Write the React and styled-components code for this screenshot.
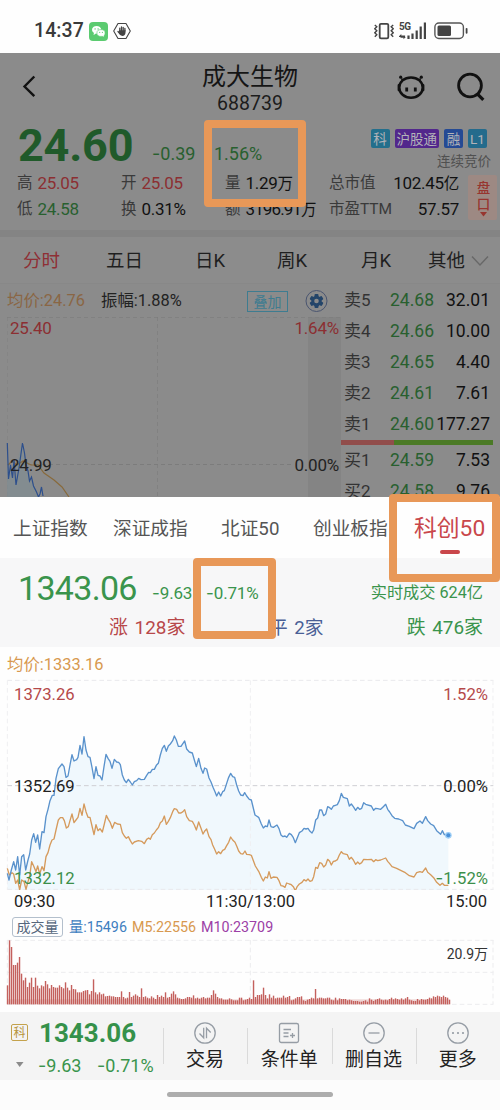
import React from "react";
import styled, { createGlobalStyle } from "styled-components";

const GlobalStyle = createGlobalStyle`
  * {
    box-sizing: border-box;
  }
  body {
    margin: 0;
    background: #fcfcfc;
    font-family: "Roboto", "Noto Sans CJK SC", sans-serif;
    color: #222;
  }
  svg {
    display: block;
    flex-shrink: 0;
  }
`;

const Screen = styled.main`
  position: relative;
  width: 500px;
  height: 1110px;
  overflow: hidden;
  display: flex;
  flex-direction: column;
`;

const Text = styled.span`
  font-size: ${(p) => p.$size || 17}px;
  font-weight: ${(p) => p.$weight || 400};
  color: ${(p) => p.$color || "inherit"};
  letter-spacing: ${(p) => p.$ls || 0}px;
  line-height: ${(p) => p.$lh || 26}px;
  white-space: nowrap;
`;

const Sign = styled.span`
  font-family: "Inter";
  letter-spacing: 0;
`;

/* ---------- status bar ---------- */

const StatusBar = styled.header`
  height: 53px;
  padding: 9px 31px 0 34px;
  background: #fefefe;
  display: flex;
  align-items: center;
  justify-content: space-between;
  flex-shrink: 0;
`;

const StatusGroup = styled.div`
  display: flex;
  align-items: center;
  gap: 5px;
`;

/* ---------- stock page behind the sheet ---------- */

const StockPage = styled.section`
  height: 444px;
  background: #8b8b8b;
  flex-shrink: 0;
  overflow: hidden;
`;

const TitleBar = styled.div`
  height: 65px;
  display: grid;
  grid-template-columns: 110px 1fr 110px;
`;

const BackSlot = styled.div`
  padding: 22px 0 0 22px;
`;

const TitleBox = styled.div`
  padding-top: 11px;
  display: flex;
  flex-direction: column;
  align-items: center;
`;

const TitleIcons = styled.div`
  padding: 19px 14px 0 0;
  display: flex;
  justify-content: flex-end;
  gap: 32px;
`;

const PriceLine = styled.div`
  height: 52px;
  display: flex;
  justify-content: space-between;
  padding: 0 9px 0 18px;
`;

const Prices = styled.div`
  display: grid;
  grid-template-columns: 134px 62px auto;
  line-height: 0;
`;

const PriceChange = styled.div`
  padding-top: 23px;
`;

const TagColumn = styled.div`
  padding-top: 11px;
  display: flex;
  flex-direction: column;
  align-items: flex-end;
  gap: 3px;
`;

const TagRow = styled.div`
  display: flex;
  gap: 5px;
  padding-right: 4px;
`;

const Tag = styled.span`
  height: 19px;
  min-width: 19px;
  padding: 0 2px;
  border-radius: 2px;
  background: ${(p) => p.$bg};
  color: #b3b3b8;
  font-size: 13.5px;
  line-height: 21px;
  text-align: center;
`;

const StatsWrap = styled.div`
  height: 60px;
  display: flex;
  padding: 0 3px 0 17px;
`;

const Stats = styled.div`
  width: 442px;
  display: grid;
  grid-template-columns: 104px 104px 104px 130px;
  grid-auto-rows: 26px;
`;

const Stat = styled.div`
  display: flex;
  gap: 5px;
  justify-content: ${(p) => (p.$wide ? "space-between" : "flex-start")};
`;

const Unit = styled.span`
  font-size: 15.5px;
`;

const DepthButton = styled.div`
  margin: 5px 0 0 9px;
  width: 29px;
  height: 45px;
  border-radius: 2px;
  background: #9d8983;
  color: #97352f;
  display: flex;
  flex-direction: column;
  align-items: center;
  font-size: 13.5px;
  font-weight: 500;
  line-height: 16px;
  padding: 5px 0 0 2px;
`;

const Gap = styled.div`
  height: 7px;
  background: #848484;
`;

const PeriodTabs = styled.nav`
  height: 47px;
  padding: 1px 0 0 23px;
  display: grid;
  grid-template-columns: 83px 89px 82px 84px 67px 43px 18px;
  align-items: center;
  background: #8c8c8c;
  border-bottom: 1px solid #888;
`;

const StockBody = styled.div`
  display: grid;
  grid-template-columns: 341px 159px;
`;

const ChartHead = styled.div`
  height: 33px;
  padding: 1px 0 0 7px;
  display: grid;
  grid-template-columns: 94px 146px 58px 24px;
  align-items: center;
`;

const Overlay = styled.span`
  width: 41px;
  height: 21px;
  border: 1px solid #3e7c90;
  color: #3e7c90;
  font-size: 14px;
  line-height: 20px;
  text-align: center;
`;

const ChartFrame = styled.div`
  display: grid;
  height: ${(p) => p.$height}px;
  > * {
    grid-area: 1 / 1;
  }
`;

const LabelLayer = styled.div`
  display: flex;
  flex-direction: column;
  padding: ${(p) => p.$pad};
  gap: ${(p) => p.$gap || 0}px;
`;

const LabelRow = styled.div`
  display: flex;
  justify-content: space-between;
  height: 20px;
`;

const OrderBook = styled.div`
  padding-top: 1px;
`;

const OrderRow = styled.div`
  height: 31px;
  padding: 0 10px 1px 3px;
  display: grid;
  grid-template-columns: 46px 44px 1fr;
  align-items: center;
  text-align: right;
  > :first-child {
    text-align: left;
  }
`;

const RatioBar = styled.div`
  height: 5px;
  width: 152px;
  background: #4b7a26;
  display: flex;
`;

const RatioSell = styled.div`
  width: 35%;
  background: #914d4b;
`;

/* ---------- index sheet ---------- */

const Sheet = styled.section`
  height: 515px;
  background: #fefefe;
  flex-shrink: 0;
`;

const IndexTabs = styled.nav`
  height: 61px;
  padding-left: 13px;
  display: grid;
  grid-template-columns: 100px 108px 92px 101px auto;
  justify-content: start;
  line-height: 0;
  padding-top: 19px;
`;

const ActiveTab = styled.div`
  display: flex;
  flex-direction: column;
  align-items: center;
  &::after {
    content: "";
    width: 20px;
    height: 4px;
    margin-top: 8px;
    border-radius: 2px;
    background: #c9474b;
  }
`;

const IndexQuote = styled.div`
  height: 89px;
  padding: 10px 17px 0 18px;
  background: #f7f7f8;
`;

const IndexPrices = styled.div`
  height: 40px;
  display: grid;
  grid-template-columns: 134px 54px 1fr auto;
  line-height: 0;
  > :not(:first-child) {
    padding-top: 12px;
  }
`;

const Breadth = styled.div`
  padding: 7px 0 0 91px;
  display: grid;
  grid-template-columns: 160px 1fr auto;
  word-spacing: 2px;
`;

const AverageLine = styled.div`
  height: 28px;
  padding: 5px 0 0 7px;
  line-height: 0;
`;

const AxisRow = styled.div`
  height: 23px;
  padding: 0 13px 0 14px;
  display: flex;
  justify-content: space-between;
`;

const VolumeHead = styled.div`
  height: 25px;
  padding-left: 12px;
  display: grid;
  grid-template-columns: 57px 63px 69px auto;
  justify-content: start;
  align-items: center;
`;

const VolumeName = styled.span`
  width: 51px;
  height: 20px;
  border: 1px solid #b3bfcc;
  border-radius: 3px;
  color: #56677c;
  font-size: 14px;
  line-height: 19px;
  text-align: center;
`;

/* ---------- bottom bar ---------- */

const BottomBar = styled.footer`
  height: 68px;
  background: #f4f4f4;
  display: grid;
  grid-template-columns: 163px repeat(4, 1fr);
  flex-shrink: 0;
`;

const BottomQuote = styled.div`
  padding: 7px 0 0 11px;
  display: grid;
  grid-template-columns: 28px 1fr;
  grid-template-rows: 27px 38px;
  align-items: center;
`;

const BoardTag = styled.span`
  width: 17px;
  height: 17px;
  border: 1px solid #c4a24c;
  border-radius: 2px;
  color: #b8953c;
  font-size: 12px;
  line-height: 16px;
  text-align: center;
`;

const BottomChange = styled.div`
  display: grid;
  grid-template-columns: 59px auto;
  padding-top: 1px;
  margin-left: -1px;
`;

const Action = styled.button`
  border: 0;
  padding: 10px 0 0;
  background: linear-gradient(#dadada, #dadada) 0 16px / 1px 36px no-repeat;
  display: flex;
  flex-direction: column;
  align-items: center;
  gap: 3px;
  font-family: inherit;
  color: #222;
`;

const HomeArea = styled.div`
  height: 30px;
  display: flex;
  justify-content: center;
  padding-top: 12px;
  background: #fcfcfc;
`;

const HomeBar = styled.div`
  width: 166px;
  height: 5px;
  border-radius: 3px;
  background: #adadad;
`;

/* hand-drawn marker frames laid over the screen */
const Marker = styled.div`
  position: absolute;
  left: ${(p) => p.$x}px;
  top: ${(p) => p.$y}px;
  width: ${(p) => p.$w}px;
  height: ${(p) => p.$h}px;
  border: 8px solid #e89858;
  border-radius: 4px;
`;

/* ---------- data ---------- */

const stats = [
  { label: "高", value: "25.05", color: "#8c2f32" },
  { label: "开", value: "25.05", color: "#8c2f32" },
  { label: "量", value: "1.29", unit: "万" },
  { label: "总市值", value: "102.45", unit: "亿", wide: true },
  { label: "低", value: "24.58", color: "#28602f" },
  { label: "换", value: "0.31%" },
  { label: "额", value: "3196.91", unit: "万", ls: -0.9 },
  { label: "市盈TTM", value: "57.57", wide: true },
];

const sells = [
  ["卖5", "24.68", "32.01"],
  ["卖4", "24.66", "10.00"],
  ["卖3", "24.65", "4.40"],
  ["卖2", "24.61", "7.61"],
  ["卖1", "24.60", "177.27"],
];

const buys = [
  ["买1", "24.59", "7.53"],
  ["买2", "24.58", "9.76"],
];

// chart space is three units per pixel
const priceLine =
  "22,670 27,690 34,660 41,635 47,660 53,620 59,675 65,620 71,614 77,660 84,630 89,612 95,570 101,551 107,577 113,555 119,597 126,545 132,548 138,500 144,478 150,452 157,436 162,436 168,385 175,356 186,342 192,350 198,382 204,378 210,345 216,314 222,333 230,329 234,322 240,286 246,312 252,260 258,300 264,320 270,322 276,352 282,386 288,350 294,376 300,378 306,390 312,350 318,313 324,325 330,334 336,355 343,328 350,336 356,337 361,344 367,375 373,390 379,398 385,388 391,396 397,405 403,395 410,392 416,385 423,389 433,388 440,376 446,367 451,368 457,358 463,358 469,346 475,340 481,315 487,295 493,286 499,304 505,288 511,282 518,272 523,258 529,270 535,289 543,289 549,280 554,273 560,297 568,306 577,309 583,330 589,350 596,325 603,355 609,370 614,354 620,357 627,384 633,396 640,414 645,425 650,438 656,426 662,438 668,425 673,422 680,400 686,382 692,370 698,380 704,382 710,405 716,423 722,435 729,437 734,428 740,438 748,448 754,450 765,495 776,502 784,522 790,534 796,528 802,530 807,510 813,530 820,532 831,525 837,536 843,555 849,560 855,558 860,562 868,550 874,554 880,563 886,578 892,563 898,548 906,543 912,535 918,537 924,535 930,544 936,549 941,540 947,510 953,504 959,480 965,480 971,497 977,492 983,470 989,473 994,478 1000,468 1006,466 1012,464 1018,452 1024,430 1030,442 1042,446 1048,468 1054,462 1060,470 1067,481 1073,472 1079,478 1085,475 1091,458 1097,463 1114,468 1121,481 1127,475 1133,476 1142,478 1150,470 1157,463 1163,478 1169,486 1176,497 1184,505 1196,507 1208,512 1216,525 1228,529 1242,536 1250,520 1260,513 1267,520 1277,500 1283,512 1292,522 1301,527 1310,542 1322,553 1327,542 1333,554 1345,556";

const averageLine =
  "22,655 28,675 36,668 41,672 47,700 53,690 59,720 65,690 72,695 78,718 84,695 89,678 95,635 101,648 108,665 113,648 119,672 126,650 132,662 138,620 144,608 150,585 156,570 162,567 168,540 175,510 181,503 188,503 193,512 199,534 205,530 210,512 216,492 222,518 228,510 234,502 240,475 246,496 252,462 258,485 264,502 270,502 276,528 282,554 288,524 294,542 300,536 307,546 313,522 319,496 325,508 331,518 337,535 344,517 352,522 361,523 367,548 373,558 379,565 385,560 391,572 397,582 403,576 415,572 425,574 433,581 440,568 446,564 451,568 457,554 463,549 469,540 475,533 481,518 487,513 493,498 499,523 505,514 511,503 518,485 523,476 530,478 536,489 543,489 549,485 554,479 560,500 568,512 577,514 583,525 589,540 596,516 603,535 609,552 615,542 620,537 627,560 633,569 638,585 644,598 650,612 656,605 662,611 668,601 674,598 680,587 686,577 692,561 698,570 705,577 711,590 716,603 722,611 729,612 735,603 740,613 748,614 754,616 766,648 776,664 784,682 790,693 796,681 802,684 807,665 813,685 820,681 831,682 837,692 843,707 849,708 855,712 860,699 868,702 874,704 880,710 886,722 892,709 898,702 906,697 912,689 918,693 924,687 930,694 936,692 941,680 947,652 953,655 959,638 965,640 971,651 977,645 983,628 989,634 994,645 1000,634 1006,633 1012,629 1018,615 1024,605 1030,611 1042,614 1048,628 1054,622 1060,630 1067,643 1073,636 1079,642 1085,638 1091,628 1103,629 1114,628 1121,635 1127,629 1133,632 1142,630 1157,624 1163,634 1169,641 1176,650 1190,655 1202,661 1216,668 1228,677 1242,681 1250,668 1260,665 1267,667 1277,654 1283,667 1292,674 1301,683 1310,697 1320,706 1327,700 1333,706 1345,706";

const volumes = [
  57, 192, 172, 118, 118, 125, 142, 92, 72, 80, 52, 65, 80, 52, 80, 56, 48, 57,
  54, 70, 60, 48, 58, 52, 50, 50, 57, 52, 48, 66, 50, 42, 58, 46, 45, 36, 36,
  36, 40, 42, 43, 30, 40, 75, 36, 30, 36, 30, 32, 24, 25, 26, 24, 24, 22, 22,
  22, 39, 22, 18, 20, 37, 22, 26, 30, 26, 22, 48, 22, 24, 20, 18, 24, 20, 16,
  28, 22, 26, 22, 36, 20, 22, 32, 39, 30, 20, 18, 16, 16, 18, 22, 22, 20, 27,
  18, 20, 17, 20, 22, 18, 20, 20, 28, 42, 32, 22, 18, 18, 14, 14, 14, 18, 15,
  12, 12, 12, 20, 20, 12, 14, 16, 20, 16, 72, 22, 28, 28, 30, 50, 28, 18, 30,
  20, 26, 18, 20, 20, 20, 26, 20, 22, 25, 12, 14, 18, 22, 22, 24, 12, 10, 14,
  16, 20, 18, 46, 18, 20, 20, 18, 18, 20, 20, 14, 12, 20, 12, 18, 16, 16, 16,
  12, 14, 12, 10, 10, 10, 8, 8, 10, 12, 8, 18, 14, 10, 14, 16, 18, 14, 12, 14,
  12, 16, 20, 15, 18, 16, 14, 18, 14, 18, 22, 14, 12, 10, 10, 16, 12, 16, 14,
  14, 16, 20, 18, 24, 22, 26, 24, 22, 26, 22, 20, 14,
];

/* ---------- icons ---------- */

const WechatIcon = () => (
  <svg width="19" height="19" viewBox="0 0 19 19">
    <rect width="19" height="19" rx="4" fill="#5bcb70" />
    <ellipse cx="7.6" cy="7.8" rx="4.6" ry="3.9" fill="#fff" />
    <path d="M5 10.5 4.6 13l2.5-1.6z" fill="#fff" />
    <ellipse cx="12" cy="11" rx="4.1" ry="3.4" fill="#fff" stroke="#5bcb70" strokeWidth=".6" />
    <path d="m13 13.8 2 1-.4-2z" fill="#fff" />
    <g fill="#5bcb70">
      <circle cx="6.1" cy="6.9" r=".7" />
      <circle cx="9.1" cy="6.9" r=".7" />
      <circle cx="10.7" cy="10.3" r=".6" />
      <circle cx="13.4" cy="10.3" r=".6" />
    </g>
  </svg>
);

const HandIcon = () => (
  <svg width="18" height="18" viewBox="0 0 18 18" fill="none" stroke="#444">
    <path d="M5 1.5h8L17.3 9 13 16.5H5L.7 9z" strokeWidth="1.1" strokeLinejoin="round" />
    <path d="M6.8 9V6.2M8.5 8.5V5M10.2 8.5V5.3M11.9 9V6.5M5 9.5l1.8 2" strokeWidth="1.3" strokeLinecap="round" />
    <path d="M6.2 8.3h6.3v2.4c0 2-1.3 3.2-3.1 3.2-2.1 0-2.8-1.2-3.6-2.8z" fill="#444" stroke="none" />
  </svg>
);

const VibrateIcon = () => (
  <svg width="20" height="18" viewBox="0 0 20 18" fill="none" stroke="#444">
    <rect x="5.7" y="1.8" width="8.6" height="14.6" rx="1.3" strokeWidth="1.8" />
    <path
      d="M.8 3l2 1.800-2 2 2 2-2 2 2 2-2 2M19.200 3l-2 1.800 2 2-2 2 2 2-2 2 2 2"
      strokeWidth="1.4"
    />
  </svg>
);

const SignalBox = styled.div`
  display: grid;
  width: 28px;
  height: 18px;
  margin-right: 2px;
  > * {
    grid-area: 1 / 1;
  }
`;

const SignalIcon = () => (
  <SignalBox>
    <Text $size={10} $weight={700} $lh={9} $ls={-0.5} $color="#444">
      5G
    </Text>
    <svg width="28" height="18" viewBox="0 0 28 18" fill="#444">
      <path d="M0 14.3l2.3-2.3v1.6h3.8v1.3H0zM6.8 15l-2.3 2.3v-1.6H1.5v-1z" />
      <rect x="8.4" y="13.5" width="2.2" height="3.5" />
      <rect x="12.4" y="11.5" width="2.2" height="5.5" />
      <rect x="16.6" y="8.5" width="2.2" height="8.5" />
      <rect x="20.6" y="4.5" width="2.2" height="12.5" />
      <rect x="24.8" y="0.5" width="2.2" height="16.5" />
    </svg>
  </SignalBox>
);

const BatteryIcon = () => (
  <svg width="35" height="18" viewBox="0 0 35 18">
    <rect x=".9" y="1" width="28.5" height="15.5" rx="4" fill="none" stroke="#555" strokeWidth="1.4" />
    <rect x="3.5" y="3.5" width="13.5" height="10.5" rx="1.5" fill="#444" />
    <path d="M32.6 6.8v4" stroke="#444" strokeWidth="1.8" strokeLinecap="round" />
  </svg>
);

const BackIcon = () => (
  <svg width="15" height="24" viewBox="0 0 15 24" fill="none" stroke="#111" strokeWidth="2.4">
    <path d="M12.3 1.5 2.5 11.5l9.8 9.7" />
  </svg>
);

const RobotIcon = () => (
  <svg width="28" height="29" viewBox="0 0 28 29" fill="none" stroke="#111" strokeWidth="2.5">
    <ellipse cx="14" cy="15.6" rx="11.8" ry="10.2" />
    <path d="M6.2 8.8 4.4 6.6M21.8 8.8l1.8-2.2" strokeWidth="1.6" />
    <path d="M1.9 13.2v4.8M26.1 13.2v4.8" strokeWidth="2.6" strokeLinecap="round" />
    <path d="M9.7 15.5v4M18.3 15.5v4" strokeWidth="2.8" />
    <g fill="#111" stroke="none">
      <circle cx="3.7" cy="5.2" r="1.6" />
      <circle cx="24.3" cy="5.2" r="1.6" />
    </g>
  </svg>
);

const SearchIcon = () => (
  <svg width="29" height="30" viewBox="0 0 29 30" fill="none" stroke="#111" strokeWidth="2.8">
    <circle cx="13" cy="13.5" r="11.4" />
    <path d="m20.3 21.8 6 6" strokeWidth="3.2" />
  </svg>
);

const GearIcon = () => (
  <svg width="24" height="24" viewBox="0 0 24 24">
    <circle cx="11.5" cy="12" r="10.5" fill="none" stroke="#4a5570" />
    <g fill="#24456a">
      {[0, 60, 120].map((a) => (
        <rect key={a} x="9.5" y="5" width="4" height="14" rx="1" transform={`rotate(${a} 11.5 12)`} />
      ))}
      <circle cx="11.5" cy="12" r="5.2" />
    </g>
    <circle cx="11.5" cy="12" r="2.3" fill="#8b8b8b" />
  </svg>
);

const iconPaths = {
  trade: (
    <>
      <circle cx="11" cy="11" r="10.2" />
      <path d="M9.7 5.8v10L5.5 11.5M12.5 16.2v-10l4.2 4.3" />
    </>
  ),
  order: (
    <>
      <rect x="1.5" y="1.5" width="19" height="19" rx="1.8" />
      <path d="M5.5 7.5H13M5.5 11h5M5.5 14.5h5M14.5 11v5M12 13.5h5" />
    </>
  ),
  remove: (
    <>
      <circle cx="11" cy="11" r="10.2" />
      <path d="M5.5 11h11" />
    </>
  ),
  more: (
    <>
      <circle cx="11" cy="11" r="10.2" />
      <path d="M6 11h0M11 11h0M16 11h0" strokeWidth="2.2" strokeLinecap="round" />
    </>
  ),
};

const ActionIcon = ({ name }) => (
  <svg width="22" height="22" viewBox="0 0 22 22" fill="none" stroke="#969da5" strokeWidth="1.3">
    {iconPaths[name]}
  </svg>
);

/* ---------- charts ---------- */

const StockChart = () => (
  <svg width="341" height="180" viewBox="0 0 341 180" fill="none">
    <rect x="308" y="0" width="33" height="180" fill="#848484" />
    <g stroke="#7c7c7c" strokeDasharray="4 3">
      <path d="M7 .5h334M157.500 0v180" opacity=".6" />
      <path d="M7 147.5h284" />
      <path d="M7.500 0v180" opacity=".4" />
    </g>
    <path d="M7 126l2 33 3-9 3 11 4-24 3-10 3 18 4 15 6 11 4 9V180H7z" fill="#7f8d94" opacity=".6" />
    <path d="M8 148l4-4 5 4 6-4 8 4h7l6 8 10 7 8 7 7 10" stroke="#886a3c" strokeWidth="1.2" />
    <path
      d="M7.3 126l1.2 36 2-14 2 13 1.5-18 2 25 3-17 3.5-25 2 10 1.5 12 2 6 1.5 10 2-4 2 9 3 6 2 5 1.5-3 1.5-7 1.5 9"
      stroke="#2d4f8c"
      strokeWidth="1.2"
    />
  </svg>
);

const IndexChart = () => (
  <svg width="500" height="215" viewBox="0 75 1500 645" fill="none">
    <polygon points={`22,720 ${priceLine} 1345,720`} fill="#f0f8fd" />
    <g strokeWidth="3" strokeDasharray="14 9">
      <path d="M22 91H1480M22 718H1480" stroke="#e9e9ec" />
      <path d="M22 91V720M751 91V720M1479 91V720" stroke="#efeff1" />
      <path d="M22 407H1480" stroke="#cfcfd4" />
    </g>
    <polyline points={averageLine} stroke="#d59a5c" strokeWidth="4" strokeLinejoin="round" />
    <polyline points={priceLine} stroke="#5a92cc" strokeWidth="4" strokeLinejoin="round" />
    <circle cx="1345" cy="556" r="10" fill="#9ccdf5" />
    <circle cx="1345" cy="556" r="6" fill="#4a90d9" />
  </svg>
);

const VolumeChart = () => (
  <svg width="500" height="68" viewBox="0 0 1500 204" fill="none">
    <g strokeWidth="3" strokeDasharray="14 9" stroke="#ececee">
      <path d="M22 7H1480M22 103H1480M22 199H1480M22 6V199M751 6V199M1479 6V199" />
    </g>
    {volumes.map((v, i) => (
      <rect key={i} x={20.5 + i * 6} y={199 - v} width="4.2" height={v} fill="#c4605d" />
    ))}
    <rect x="21" y="184" width="1325" height="15" fill="#c4605d" opacity=".25" />
  </svg>
);

/* ---------- screen ---------- */

const App = () => {
  const orderRow = ([label, price, amount]) => (
    <OrderRow key={label}>
      <Text $size={17} $color="#333">
        {label}
      </Text>
      <Text $size={17.5} $color="#28602f">
        {price}
      </Text>
      <Text $size={17.5} $color="#111">
        {amount}
      </Text>
    </OrderRow>
  );

  return (
    <>
      <GlobalStyle />
      <Screen>
        <StatusBar>
          <StatusGroup>
            <Text $size={19.5} $weight={500} $color="#3a3a3a" $ls={0.1}>
              14:37
            </Text>
            <WechatIcon />
            <HandIcon />
          </StatusGroup>
          <StatusGroup>
            <VibrateIcon />
            <SignalIcon />
            <BatteryIcon />
          </StatusGroup>
        </StatusBar>

        <StockPage>
          <TitleBar>
            <BackSlot>
              <BackIcon />
            </BackSlot>
            <TitleBox>
              <Text $size={24} $lh={27} $color="#151515">
                成大生物
              </Text>
              <Text $size={19.5} $lh={25} $color="#1c1c1c">
                688739
              </Text>
            </TitleBox>
            <TitleIcons>
              <RobotIcon />
              <SearchIcon />
            </TitleIcons>
          </TitleBar>

          <PriceLine>
            <Prices>
              <Text $size={45} $weight={700} $lh={55} $ls={-0.2} $color="#205a2a">
                24.60
              </Text>
              <PriceChange>
                <Text $size={18} $color="#28602f">
                  <Sign>-</Sign>0.39
                </Text>
              </PriceChange>
              <PriceChange>
                <Text $size={18} $color="#28602f">
                  1.56%
                </Text>
              </PriceChange>
            </Prices>
            <TagColumn>
              <TagRow>
                <Tag $bg="#246f8c">科</Tag>
                <Tag $bg="#52278c">沪股通</Tag>
                <Tag $bg="#254a94">融</Tag>
                <Tag $bg="#246b8c">L1</Tag>
              </TagRow>
              <Text $size={13.5} $lh={20} $color="#505050">
                连续竞价
              </Text>
            </TagColumn>
          </PriceLine>

          <StatsWrap>
            <Stats>
              {stats.map((s) => (
                <Stat key={s.label} $wide={s.wide}>
                  <Text $size={15.5} $color="#3a3a3a">
                    {s.label}
                  </Text>
                  <Text $size={17} $color={s.color || "#111"} $ls={s.ls || -0.3}>
                    {s.value}
                    {s.unit && <Unit>{s.unit}</Unit>}
                  </Text>
                </Stat>
              ))}
            </Stats>
            <DepthButton>
              <span>盘</span>
              <span>口</span>
              <svg width="7" height="5" viewBox="0 0 7 5">
                <path d="M0 0h7L3.5 4.5z" fill="#97352f" />
              </svg>
            </DepthButton>
          </StatsWrap>
          <Gap />

          <PeriodTabs>
            <Text $size={18.5} $color="#8f2f35">
              分时
            </Text>
            {["五日", "日K", "周K", "月K", "其他"].map((t) => (
              <Text key={t} $size={18.5} $color="#1f1f1f">
                {t}
              </Text>
            ))}
            <svg width="18" height="12" viewBox="0 0 18 12" fill="none" stroke="#686868" strokeWidth="1.4">
              <path d="M1 1.5l8 8.5 8-8.5" />
            </svg>
          </PeriodTabs>

          <StockBody>
            <div>
              <ChartHead>
                <Text $size={16.4} $color="#8a6644">
                  均价:24.76
                </Text>
                <Text $size={16.4} $color="#222">
                  振幅:1.88%
                </Text>
                <Overlay>叠加</Overlay>
                <GearIcon />
              </ChartHead>
              <ChartFrame $height={180}>
                <StockChart />
                <LabelLayer $pad="1px 2px 0 10px" $gap={117}>
                  <LabelRow>
                    <Text $size={17} $lh={20} $ls={-0.2} $color="#8c2f32">
                      25.40
                    </Text>
                    <Text $size={17} $lh={20} $ls={-0.2} $color="#8c2f32">
                      1.64%
                    </Text>
                  </LabelRow>
                  <LabelRow>
                    <Text $size={17} $lh={20} $ls={-0.2}>
                      24.99
                    </Text>
                    <Text $size={17} $lh={20} $ls={-0.2}>
                      0.00%
                    </Text>
                  </LabelRow>
                </LabelLayer>
              </ChartFrame>
            </div>
            <OrderBook>
              {sells.map(orderRow)}
              <RatioBar>
                <RatioSell />
              </RatioBar>
              {buys.map(orderRow)}
            </OrderBook>
          </StockBody>
        </StockPage>

        <Sheet>
          <IndexTabs>
            {["上证指数", "深证成指", "北证50", "创业板指"].map((t) => (
              <Text key={t} $size={18.7} $color="#555">
                {t}
              </Text>
            ))}
            <ActiveTab>
              <Text $size={22.8} $color="#c9474b">
                科创50
              </Text>
            </ActiveTab>
          </IndexTabs>

          <IndexQuote>
            <IndexPrices>
              <Text $size={34} $lh={40} $color="#3a944c" $ls={-0.7}>
                1343.06
              </Text>
              <Text $size={17} $color="#3a944c" $ls={-0.2}>
                <Sign>-</Sign>9.63
              </Text>
              <Text $size={17} $color="#3a944c" $ls={-0.2}>
                <Sign>-</Sign>0.71%
              </Text>
              <Text $size={16.2} $color="#3a944c">
                实时成交 624亿
              </Text>
            </IndexPrices>
            <Breadth>
              <Text $size={18.9} $color="#b8484a">
                涨 128家
              </Text>
              <Text $size={18.7} $color="#4a5f96">
                平 2家
              </Text>
              <Text $size={18.9} $color="#3a944c">
                跌 476家
              </Text>
            </Breadth>
          </IndexQuote>

          <AverageLine>
            <Text $size={16.4} $color="#d8994f">
              均价:1333.16
            </Text>
          </AverageLine>

          <ChartFrame $height={215}>
            <IndexChart />
            <LabelLayer $pad="9px 12px 0 14px" $gap={72}>
              {[
                ["1373.26", "1.52%", "#b5494a"],
                ["1352.69", "0.00%", "#222"],
                ["1332.12", <><Sign>-</Sign>1.52%</>, "#3c8f4a"],
              ].map(([left, right, color]) => (
                <LabelRow key={left}>
                  <Text $size={16.7} $lh={21} $color={color}>
                    {left}
                  </Text>
                  <Text $size={16.7} $lh={21} $color={color}>
                    {right}
                  </Text>
                </LabelRow>
              ))}
            </LabelLayer>
          </ChartFrame>

          <AxisRow>
            <Text $size={16.5} $lh={23}>
              09:30
            </Text>
            <Text $size={16.5} $lh={23}>
              11:30/13:00
            </Text>
            <Text $size={16.5} $lh={23}>
              15:00
            </Text>
          </AxisRow>

          <VolumeHead>
            <VolumeName>成交量</VolumeName>
            <Text $size={14.3} $lh={28} $color="#3f7fc0">
              量:15496
            </Text>
            <Text $size={14.3} $lh={28} $color="#d8994f">
              M5:22556
            </Text>
            <Text $size={14.3} $lh={28} $color="#9c3fa6">
              M10:23709
            </Text>
          </VolumeHead>

          <ChartFrame $height={68}>
            <VolumeChart />
            <LabelLayer $pad="6px 12px 0 0">
              <LabelRow>
                <span />
                <Text $size={14} $lh={20} $color="#333">
                  20.9万
                </Text>
              </LabelRow>
            </LabelLayer>
          </ChartFrame>
        </Sheet>

        <BottomBar>
          <BottomQuote>
            <BoardTag>科</BoardTag>
            <Text $size={26} $weight={700} $color="#35914a">
              1343.06
            </Text>
            <svg width="17" height="6" viewBox="0 0 17 6">
              <path d="M5 0h7.5L8.7 5z" fill="#8b8b8b" />
            </svg>
            <BottomChange>
              <Text $size={18} $color="#3a944c">
                <Sign>-</Sign>9.63
              </Text>
              <Text $size={18} $color="#3a944c">
                <Sign>-</Sign>0.71%
              </Text>
            </BottomChange>
          </BottomQuote>
          {[
            ["trade", "交易"],
            ["order", "条件单"],
            ["remove", "删自选"],
            ["more", "更多"],
          ].map(([name, label]) => (
            <Action key={name}>
              <ActionIcon name={name} />
              <Text $size={19}>{label}</Text>
            </Action>
          ))}
        </BottomBar>

        <HomeArea>
          <HomeBar />
        </HomeArea>

        <Marker $x={204} $y={120} $w={102} $h={87} />
        <Marker $x={193} $y={558} $w={83} $h={81} />
        <Marker $x={389} $y={494} $w={111} $h={88} />
      </Screen>
    </>
  );
};

export default App;
